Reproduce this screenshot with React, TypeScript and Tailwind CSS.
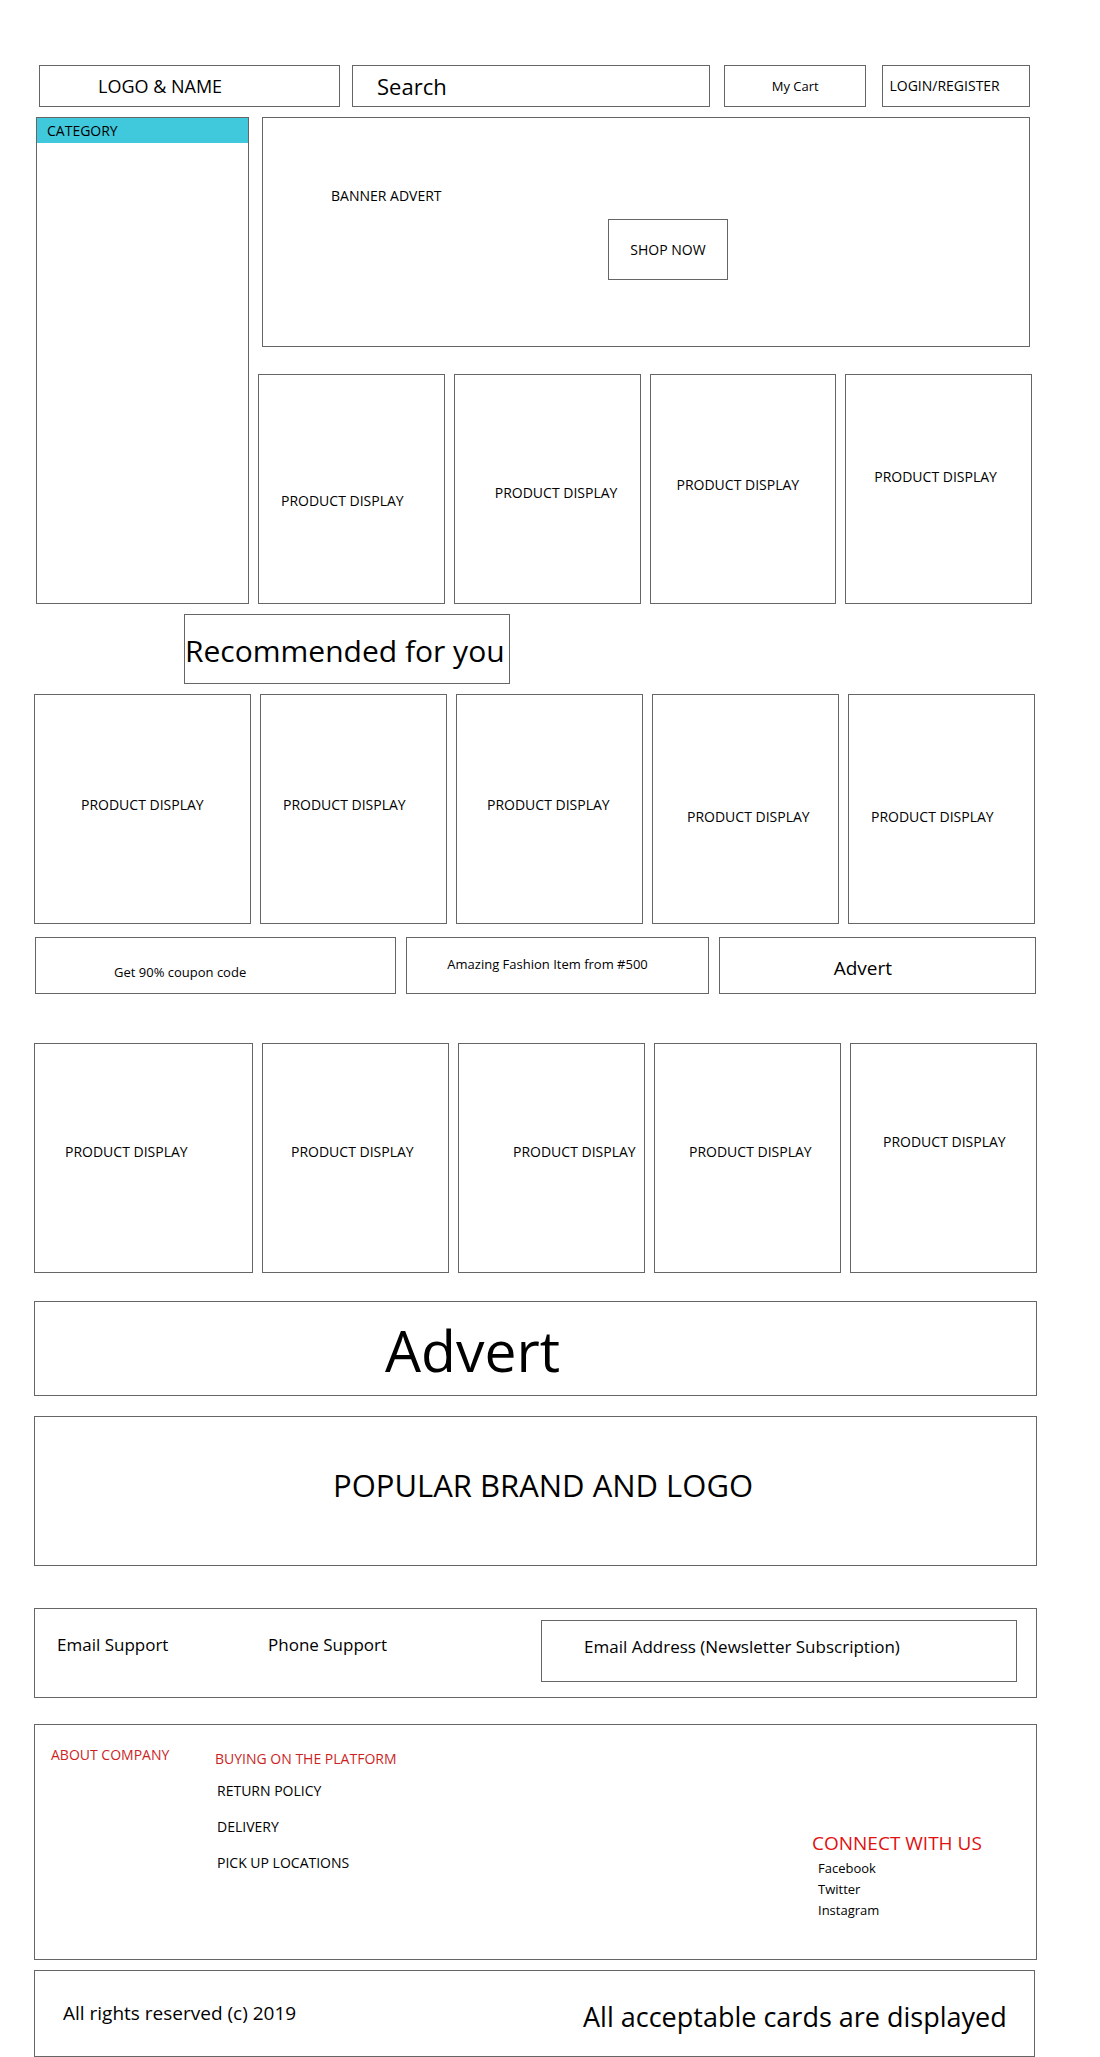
import type { ReactNode } from "react";

type Label = { place: string };

const featured: Label[] = [
  { place: "pt-29 pl-5.5" },
  { place: "pt-27 pl-10" },
  { place: "pt-25 pl-6.5" },
  { place: "pt-23 pl-7" },
];

const recommended: Label[] = [
  { place: "pt-25 pl-11.5" },
  { place: "pt-25 pl-5.5" },
  { place: "pt-25 pl-7.5" },
  { place: "pt-28 pl-8.5" },
  { place: "pt-28 pl-5.5" },
];

const more: Label[] = [
  { place: "pt-24.5 pl-7.5" },
  { place: "pt-24.5 pl-7" },
  { place: "pt-24.5 pl-13.5" },
  { place: "pt-24.5 pl-8.5" },
  { place: "pt-22 pl-8" },
];

function Box({ className = "", children }: { className?: string; children?: ReactNode }) {
  return <div className={"border border-[#666666] " + className}>{children}</div>;
}

function Products({ items, className }: { items: Label[]; className: string }) {
  return (
    <ul className={"grid gap-x-[9px] " + className}>
      {items.map((item, i) => (
        <li key={i} className={"h-[230px] border border-[#666666] " + item.place}>
          PRODUCT DISPLAY
        </li>
      ))}
    </ul>
  );
}

export default function App() {
  return (
    <div className="bg-white pt-[65px] pr-[63px] pl-[34px] font-['Open_Sans','Noto_Sans',sans-serif] text-sm leading-5 whitespace-nowrap text-black">
      <header className="mr-[7px] ml-[5px] grid h-[42px] grid-cols-[671fr_306fr] gap-x-3.5">
        <div className="grid grid-cols-[301fr_358fr] gap-x-3">
          <Box className="flex items-center pl-14.5 text-lg leading-6">LOGO &amp; NAME</Box>
          <input
            type="search"
            aria-label="Search"
            placeholder="Search"
            className="w-full min-w-0 border border-[#666666] pl-6 text-[22px] leading-8 placeholder:text-black placeholder:opacity-100"
          />
        </div>
        <div className="grid grid-cols-[142fr_147fr] gap-x-4">
          <button type="button" className="border border-[#666666] text-[13px]">
            My Cart
          </button>
          <button type="button" className="border border-[#666666] pl-1.5 text-left">
            LOGIN/REGISTER
          </button>
        </div>
      </header>

      <div className="mt-2.5 mr-[5px] ml-0.5 grid grid-cols-[213fr_774fr] gap-x-[9px]">
        <aside className="border border-[#666666]">
          <h2 className="bg-[#40c8dc] pt-[3px] pb-0.5 pl-2.5">CATEGORY</h2>
        </aside>
        <main>
          <section className="mr-0.5 ml-1 grid h-[230px] grid-cols-[345fr_421fr] border border-[#666666]">
            <p className="pt-17 pl-17">BANNER ADVERT</p>
            <button type="button" className="mt-[101px] h-[61px] w-30 border border-[#666666]">
              SHOP NOW
            </button>
          </section>
          <Products items={featured} className="mt-[27px] grid-cols-4" />
        </main>
      </div>

      <h2 className="mt-2.5 ml-[150px] h-[70px] w-[326px] border border-[#666666] pt-4 text-[30px] leading-10">
        Recommended for you
      </h2>
      <Products items={recommended} className="mt-2.5 mr-0.5 grid-cols-[217fr_187fr_187fr_187fr_187fr]" />

      <section className="mt-[13px] mr-px ml-px grid h-[57px] grid-cols-[361fr_302fr_317fr] gap-x-2.5 text-[13px]">
        <Box className="pt-6 pl-19.5">Get 90% coupon code</Box>
        <Box className="pt-4 pl-10">Amazing Fashion Item from #500</Box>
        <Box className="pt-4 pl-28.5 text-[19px] leading-7">Advert</Box>
      </section>

      <Products items={more} className="mt-[49px] grid-cols-[219fr_187fr_187fr_187fr_187fr]" />

      <Box className="mt-7 h-[95px] pt-3 pl-87.5 text-[57px] leading-[72px]">Advert</Box>
      <Box className="mt-5 h-[150px] pt-12 pl-74.5 text-[31px] leading-10">POPULAR BRAND AND LOGO</Box>

      <section className="mt-[42px] grid h-[90px] grid-cols-[211fr_295fr_476fr] border border-[#666666] pr-[19px] text-[17px] leading-6">
        <a href="#email" className="pt-6 pl-5.5">
          Email Support
        </a>
        <a href="#phone" className="pt-6 pl-5.5">
          Phone Support
        </a>
        <input
          type="email"
          aria-label="Email Address (Newsletter Subscription)"
          placeholder="Email Address (Newsletter Subscription)"
          className="mt-[11px] h-[62px] w-full min-w-0 border border-[#666666] pb-2.5 pl-10.5 placeholder:text-black placeholder:opacity-100"
        />
      </section>

      <footer>
        <section className="mt-[26px] grid h-[236px] grid-cols-[180fr_597fr_224fr] border border-[#666666]">
          <h3 className="pt-5 pl-4 text-[#cc1f1f]">ABOUT COMPANY</h3>
          <div className="pt-6">
            <h3 className="text-[#cc1f1f]">BUYING ON THE PLATFORM</h3>
            <ul className="flex flex-col gap-4 pt-3 pl-0.5">
              <li><a href="#returns">RETURN POLICY</a></li>
              <li><a href="#delivery">DELIVERY</a></li>
              <li><a href="#pickup">PICK UP LOCATIONS</a></li>
            </ul>
          </div>
          <div className="pt-26">
            <h3 className="text-[19px] leading-7 text-[#e01010]">CONNECT WITH US</h3>
            <ul className="flex flex-col gap-px pt-px pl-1.5 text-[13px]">
              <li><a href="#facebook">Facebook</a></li>
              <li><a href="#twitter">Twitter</a></li>
              <li><a href="#instagram">Instagram</a></li>
            </ul>
          </div>
        </section>
        <section className="mt-2.5 mr-0.5 grid h-[87px] grid-cols-[548fr_451fr] border border-[#666666]">
          <p className="pt-7 pl-7 text-[19px] leading-7">All rights reserved (c) 2019</p>
          <p className="pt-7 text-[27px] leading-9">All acceptable cards are displayed</p>
        </section>
      </footer>
    </div>
  );
}
